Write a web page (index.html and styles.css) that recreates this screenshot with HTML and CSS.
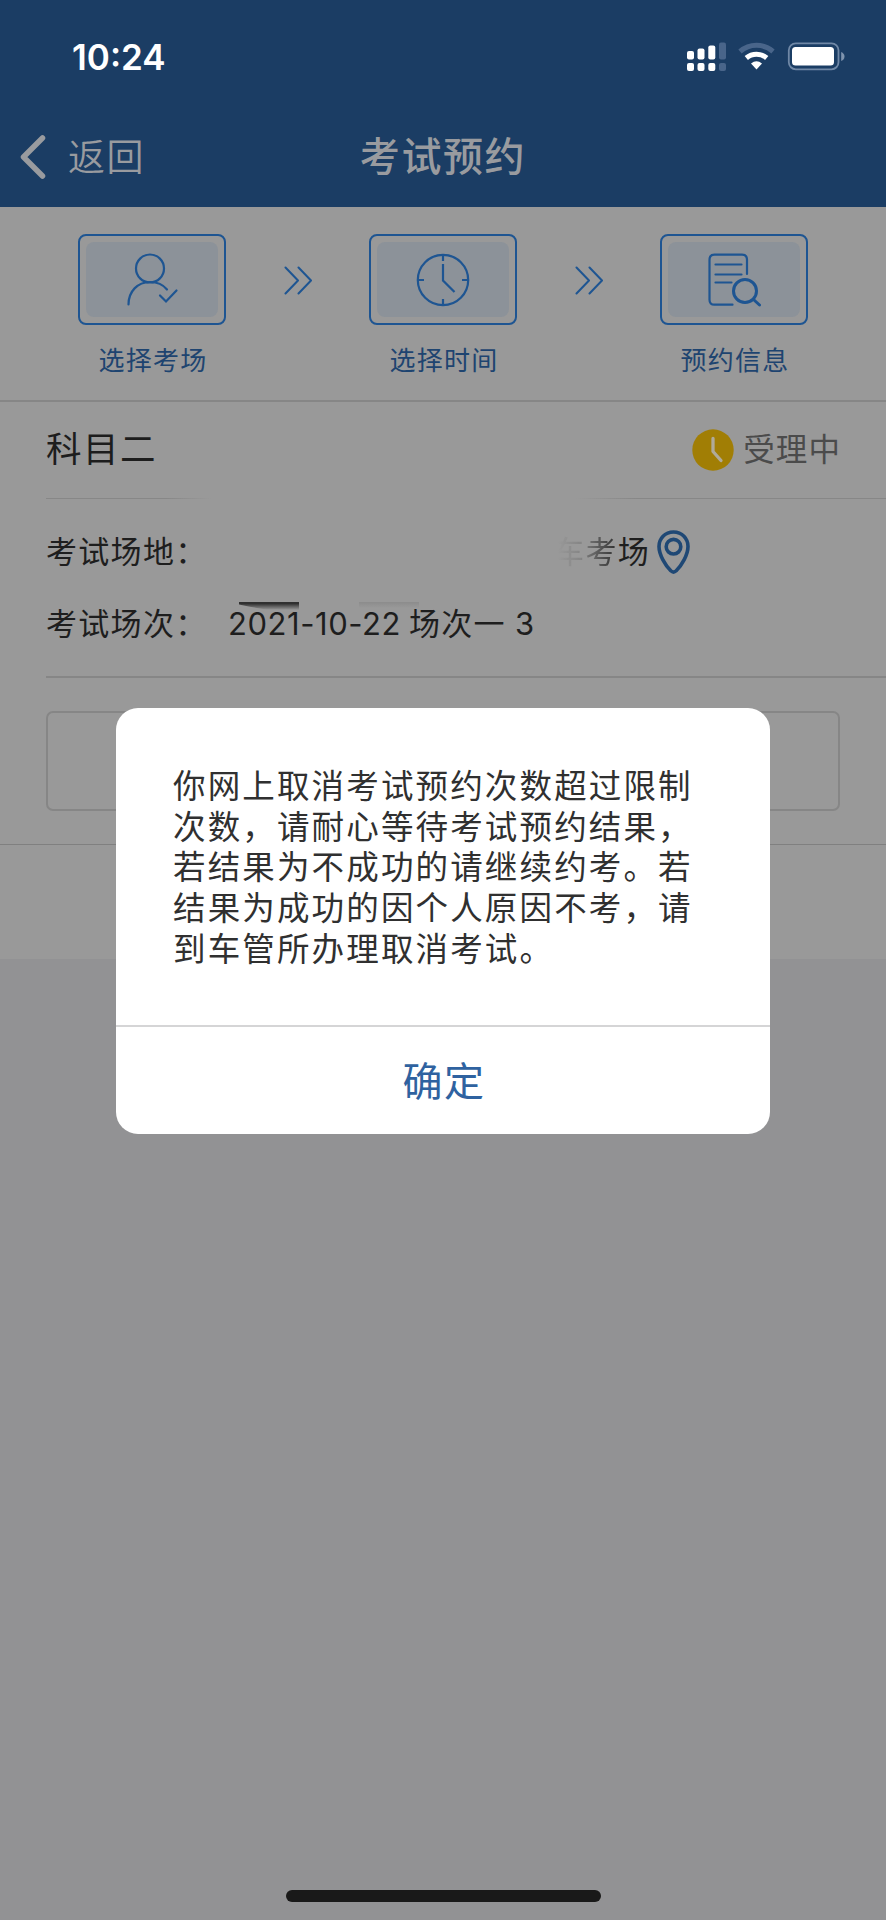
FILE: index.html
```html
<!DOCTYPE html>
<html lang="zh-CN">
<head>
<meta charset="utf-8">
<title>考试预约</title>
<link rel="stylesheet" href="styles.css">
</head>
<body>
<div class="screen">
  <header class="header">
    <div class="status">
      <span class="time">10:24</span>
      <svg class="status-icons" viewBox="0 0 160 32" width="160" height="32">
        <g fill="#fff">
          <rect x="1" y="11" width="7" height="8.500" rx="2"/><rect x="11.500" y="8.500" width="7" height="11" rx="2"/><rect x="22.300" y="5.500" width="7" height="14" rx="2"/>
          <rect x="1" y="23" width="7" height="8" rx="2"/><rect x="11.500" y="23" width="7" height="8" rx="2"/><rect x="22.300" y="23" width="7" height="8" rx="2"/>
        </g>
        <g fill="#49658a"><rect x="33" y="2.500" width="7" height="17" rx="2"/><rect x="33" y="23" width="7" height="8" rx="2"/></g>
        <path d="M54 11.500a25 25 0 0 1 33 0" fill="none" stroke="#49658a" stroke-width="5"/>
        <path d="M60.300 18a15.500 15.500 0 0 1 20.400 0" fill="none" stroke="#fff" stroke-width="5"/>
        <path d="M65 23.500q5.500-4.500 11 0L70.500 29.500z" fill="#fff"/>
        <rect x="102.800" y="3.300" width="49.700" height="26" rx="7" fill="none" stroke="#7088a6" stroke-width="1.800"/>
        <rect x="106" y="7" width="42" height="18.500" rx="3.500" fill="#fff"/>
        <path d="M155.200 12v9q3.300-1.500 3.300-4.500t-3.300-4.500z" fill="#7f94ae"/>
      </svg>
    </div>
    <nav class="nav">
      <div class="back">
        <svg class="back-icon" viewBox="0 0 26 44" width="26" height="44"><path d="M22.500 3 3.500 22l19 19" fill="none" stroke="#999b9f" stroke-width="5.500" stroke-linecap="round" stroke-linejoin="round"/></svg>
        <span>返回</span>
      </div>
      <h1 class="title">考试预约</h1>
      <div class="nav-end"></div>
    </nav>
  </header>

  <section class="steps">
    <div class="step">
      <div class="step-box"><div class="step-fill">
        <svg class="step-icon" viewBox="0 0 54 54" width="54" height="54"><circle cx="25" cy="15.500" r="14"/><path d="M3.500 51.500c0-13 9-22.500 21.500-22.500 7 0 13 2.500 17 7.500M35 42.500l6 6 10.500-11"/></svg>
      </div></div>
      <div class="step-label">选择考场</div>
    </div>
    <svg class="chevrons" viewBox="0 0 28 29" width="28" height="29"><path d="M1.500 1.500 14 14.500 1.500 27.500M14.500 1.500 27 14.500 14.500 27.500"/></svg>
    <div class="step">
      <div class="step-box"><div class="step-fill">
        <svg class="step-icon clock" viewBox="0 0 54 54" width="54" height="54"><circle cx="27" cy="27" r="25.200"/><path d="M27 2v6M27 46v6M2 27h6M46 27h6M27 11v16.500L38.500 39"/></svg>
      </div></div>
      <div class="step-label">选择时间</div>
    </div>
    <svg class="chevrons" viewBox="0 0 28 29" width="28" height="29"><path d="M1.500 1.500 14 14.500 1.500 27.500M14.500 1.500 27 14.500 14.500 27.500"/></svg>
    <div class="step">
      <div class="step-box"><div class="step-fill">
        <svg class="step-icon" viewBox="0 0 54 54" width="54" height="54"><path d="M25.500 51.700H7.500q-5 0-5-5V6.700q0-5 5-5h27.500q5 0 5 5V21M8.500 11.500h26M8.500 21.500h26M8.500 29.500h16"/><g stroke-width="3"><circle cx="38" cy="38" r="11.500"/><path d="m46.500 46.500 6 5.500"/></g></svg>
      </div></div>
      <div class="step-label">预约信息</div>
    </div>
  </section>

  <section class="card">
    <div class="card-head">
      <h2 class="subject">科目二</h2>
      <div class="state">
        <svg viewBox="0 0 42 42" width="42" height="42"><circle cx="21" cy="21" r="20.700" fill="#a17e05"/><path d="M21 9.500v13l8 9" fill="none" stroke="#b0aa9a" stroke-width="3.300" stroke-linecap="round" stroke-linejoin="round"/></svg>
        <span>受理中</span>
      </div>
    </div>
    <div class="details">
      <div class="row">
        <span class="key">考试场地：</span>
        <span class="place"><span class="faded">车考</span>场</span>
        <svg class="pin" viewBox="0 0 33 44" width="33" height="44"><path d="M16.500 2C8 2 2 8.500 2 16.500 2 25 8.500 35.500 13.800 40.800q2.700 2.500 5.400 0C24.500 35.500 31 25 31 16.500 31 8.500 25 2 16.500 2z"/><circle cx="16.500" cy="16.700" r="7.300"/></svg>
      </div>
      <div class="row">
        <span class="key">考试场次：</span>
        <span class="session"><span class="date">2021-10-22</span><span class="slot">场次一</span><span class="num">3</span><i class="smudge smudge-dark"></i><i class="smudge smudge-light"></i></span>
      </div>
    </div>
    <div class="actions"><div class="action-button"></div></div>
    <div class="card-foot"></div>
  </section>

  <div class="dialog" role="alertdialog">
    <p class="message">你网上取消考试预约次数超过限制<br>次数，请耐心等待考试预约结果，<br>若结果为不成功的请继续约考。若<br>结果为成功的因个人原因不考，请<br>到车管所办理取消考试。</p>
    <div class="confirm">确定</div>
  </div>
  <div class="home-bar"></div>
</div>
</body>
</html>
```
FILE: styles.css
```css
* { box-sizing: border-box; }
body { margin: 0; }
h1, h2, p { margin: 0; font-weight: 400; }
svg { display: block; flex: none; }

.screen {
  position: relative;
  width: 886px;
  height: 1920px;
  overflow: hidden;
  background: #929294;
  font-family: Inter, "Noto Sans CJK SC", sans-serif;
  white-space: nowrap;
}

/* Header */
.header { height: 207px; background: #1b3d64; }
.status {
  display: flex;
  justify-content: space-between;
  height: 107px;
  padding: 40px 40px 0 72px;
}
.time { color: #fff; font-size: 35px; font-weight: 600; line-height: 34px; letter-spacing: 0; }
.nav {
  display: grid;
  grid-template-columns: 1fr auto 1fr;
  align-items: center;
  height: 100px;
  padding: 0 20px;
  color: #999b9f;
}
.back { display: flex; align-items: center; gap: 22px; font-size: 37px; font-weight: 350; letter-spacing: 1.5px; line-height: 50px; }
.back span { padding-top: 2px; }
.title { font-size: 40px; font-weight: 500; letter-spacing: 1.6px; line-height: 50px; }

/* Step strip */
.steps {
  display: flex;
  justify-content: space-between;
  height: 195px;
  padding: 27px 78px 0;
  background: #999;
  border-bottom: 2px solid #868686;
}
.step { display: flex; flex-direction: column; align-items: center; width: 148px; }
.step-box { width: 148px; height: 91px; padding: 6px; border: 2px solid #1e5592; border-radius: 8px; }
.step-fill { display: flex; align-items: center; justify-content: center; height: 75px; background: #8c9299; border-radius: 8px; }
.step-icon { fill: none; stroke: #1e5592; stroke-width: 2.2; stroke-linecap: round; }
.clock { stroke-linecap: butt; }
.step-label { margin-top: 17px; padding-left: 2px; color: #1e4470; font-size: 26px; letter-spacing: 1.2px; line-height: 38px; }
.chevrons { margin-top: 32px; fill: none; stroke: #1e5592; stroke-width: 2; stroke-linecap: round; stroke-linejoin: round; }

/* Booking card */
.card { height: 557px; background: #999; }
.card-head {
  display: flex;
  align-items: center;
  justify-content: space-between;
  height: 97px;
  margin-left: 46px;
  padding-right: 45px;
  border-bottom: 1px solid;
  border-image: linear-gradient(90deg, #878787 0, #878787 120px, transparent 166px, transparent 530px, #878787 590px) 1;
}
.subject { color: #1d1d1d; font-size: 35.500px; letter-spacing: 1.500px; line-height: 44px; }
.state { display: flex; align-items: center; gap: 9px; color: #4b4b4b; font-size: 31.500px; letter-spacing: 1.1px; line-height: 40px; }
.details {
  display: flex;
  flex-direction: column;
  gap: 32px;
  height: 179px;
  margin-left: 46px;
  padding-top: 33px;
  color: #1e1e1e;
  font-size: 31px;
  letter-spacing: 1.300px;
  line-height: 40px;
  border-bottom: 2px solid #868686;
}
.row { display: flex; align-items: center; height: 40px; }
.key { width: 182px; }
.place { width: 422px; text-align: right; }
.faded {
  color: transparent;
  background: linear-gradient(90deg, rgba(30,30,30,0) 5px, rgba(30,30,30,.16) 28px, rgba(30,30,30,.3) 34px, rgba(30,30,30,.85) 64px);
  background-clip: text;
  -webkit-background-clip: text;
}
.pin { margin-left: 7px; fill: none; stroke: #1f4875; stroke-width: 3.6; }
.session { position: relative; display: flex; }
.date { width: 181px; letter-spacing: 0.550px; }
.num { margin-left: 9px; }
.smudge { position: absolute; top: -2px; width: 60px; height: 8px; }
.smudge-dark { left: 11px; background: linear-gradient(#303030 20%, #44444499 60%, transparent); clip-path: polygon(0 0, 100% 0, 100% 100%, 45% 95%, 18% 60%, 0 30%); }
.smudge-light { left: 131px; height: 6px; background: linear-gradient(#8c8c8c, transparent); }
.actions { height: 167px; padding: 33px 46px 0; border-bottom: 1px solid #808080; }
.action-button { height: 100px; border: 2px solid #868686; border-radius: 7px; }
.card-foot { height: 114px; }

/* Alert */
.dialog {
  position: absolute;
  top: 708px;
  left: 116px;
  width: 654px;
  height: 426px;
  background: #fff;
  border-radius: 22px;
}
.message { height: 319px; padding: 59px 0 0 57px; color: #303030; font-size: 32.500px; letter-spacing: 2.150px; line-height: 40.700px; border-bottom: 2px solid #d5d5d6; }
.confirm { height: 107px; padding-left: 2px; color: #2f62a0; font-size: 40px; letter-spacing: 1.500px; line-height: 110px; text-align: center; }
.home-bar { position: absolute; top: 1890px; left: 286px; width: 315px; height: 12px; background: #191919; border-radius: 6px; }
```
